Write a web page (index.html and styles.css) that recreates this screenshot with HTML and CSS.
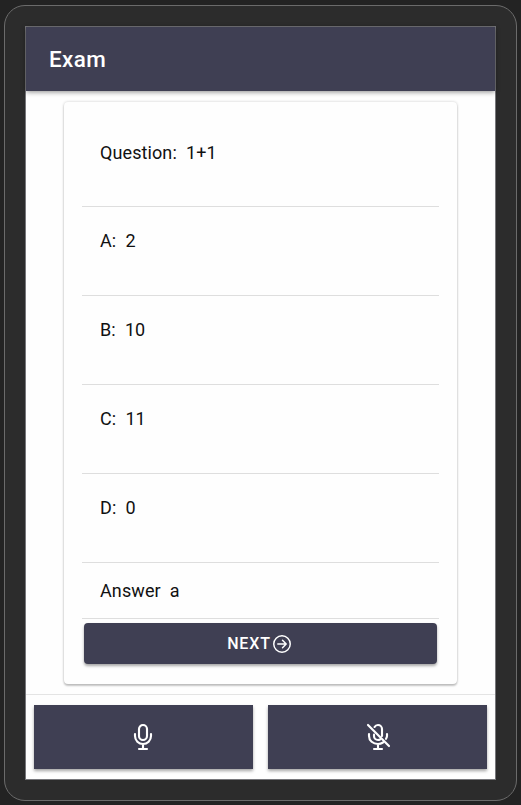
FILE: index.html
```html
<!DOCTYPE html>
<html lang="en">
<head>
<meta charset="utf-8">
<title>Exam</title>
<link rel="stylesheet" href="styles.css">
</head>
<body>
<div class="device">
  <div class="screen">
    <header class="toolbar"><h1>Exam</h1></header>
    <main class="content">
      <section class="card">
        <div class="item question">Question:&nbsp; 1+1</div>
        <div class="item">A:&nbsp; 2</div>
        <div class="item">B:&nbsp; 10</div>
        <div class="item">C:&nbsp; 11</div>
        <div class="item">D:&nbsp; 0</div>
        <div class="item answer">Answer&nbsp; a</div>
        <button class="next">NEXT<svg viewBox="0 0 512 512"><path d="M448 256c0-106-86-192-192-192S64 150 64 256s86 192 192 192 192-86 192-192zM268 343l86-87-86-87M342 256H158"/></svg></button>
      </section>
    </main>
    <footer class="footer">
      <button class="mic" aria-label="Record"><svg viewBox="0 0 512 512"><path d="M192 448h128M384 208v32c0 70.400-57.600 128-128 128s-128-57.600-128-128v-32M256 368v80"/><path d="M256 64a63.700 63.700 0 0 0-64 64v111c0 35.200 29 65 64 65s64-29 64-65V128c0-36-28-64-64-64z"/></svg></button>
      <button class="mic off" aria-label="Mute"><svg viewBox="0 0 512 512"><path d="M432 400L96 64M400 240v-32M384 285c8-14 16-28 16-45M192 448h128M256 368v80M112 208v32c0 77 64 128 144 128 30 0 57-9 80-24M192 218v22c0 36 28 64 64 64 12 0 23-3 32-8M201 96c11-19 31-32 55-32 36 0 64 28 64 64v112"/></svg></button>
    </footer>
  </div>
</div>
</body>
</html>
```
FILE: styles.css
```css
* { box-sizing: border-box; }
body {
  margin: 0;
  height: 805px;
  padding: 5px 4px 4px;
  overflow: hidden;
  background: #232323;
  font-family: Roboto, sans-serif;
  color: #111;
}
.device {
  height: 796px;
  padding: 20px;
  border: 1px solid #6b6b6b;
  border-radius: 21px;
  background: #2c2c2c;
}
.screen {
  display: flex;
  flex-direction: column;
  height: 754px;
  border: 1px solid #77777b;
  background: #fefefe;
}
.toolbar {
  display: flex;
  align-items: center;
  height: 64px;
  flex: none;
  padding: 0 23px 1px;
  background: #3f3f53;
  color: #fff;
  box-shadow: 0 1px 5px rgba(0, 0, 0, .45);
}
.toolbar h1 {
  margin: 0;
  font-size: 22.400px;
  font-weight: 500;
  letter-spacing: .4px;
}
.content {
  flex: 1;
  padding: 11px 38px 0;
}
.card {
  height: 582px;
  padding: 16px 18px 0;
  border-radius: 4px;
  background: #fefefe;
  box-shadow: 0 2px 2px rgba(0, 0, 0, .2), 0 0 3px rgba(0, 0, 0, .2);
}
.item {
  height: 89px;
  padding: 22px 18px 0;
  border-bottom: 1px solid #dedede;
  font-size: 18px;
  line-height: 24px;
  letter-spacing: .1px;
}
.item.question {
  padding-top: 23px;
}
.item.answer {
  height: 56px;
  padding-top: 16px;
}
button {
  border: 0;
  background: #3f3f53;
  color: #fff;
  font-family: inherit;
}
svg {
  fill: none;
  stroke: currentColor;
  stroke-width: 34;
  stroke-linecap: round;
  stroke-linejoin: round;
}
.next {
  display: flex;
  align-items: center;
  justify-content: center;
  width: 353px;
  height: 41px;
  margin: 4px 2px 0;
  padding: 0 1px 0 0;
  border-radius: 4px;
  box-shadow: 0 2px 3px rgba(0, 0, 0, .35);
  font-size: 16px;
  font-weight: 500;
  letter-spacing: .85px;
}
.next svg {
  width: 22px;
  height: 22px;
}
.footer {
  display: flex;
  gap: 15px;
  height: 85px;
  flex: none;
  padding: 10px 8px;
  border-top: 1px solid #e4e4e4;
}
.mic {
  display: flex;
  flex: 1;
  align-items: center;
  justify-content: center;
  height: 64px;
  padding: 0 1px 0 0;
  box-shadow: 0 2px 3px rgba(0, 0, 0, .35);
}
.mic.off {
  padding: 0 0 0 1px;
}
.mic svg {
  width: 32px;
  height: 32px;
}
```
